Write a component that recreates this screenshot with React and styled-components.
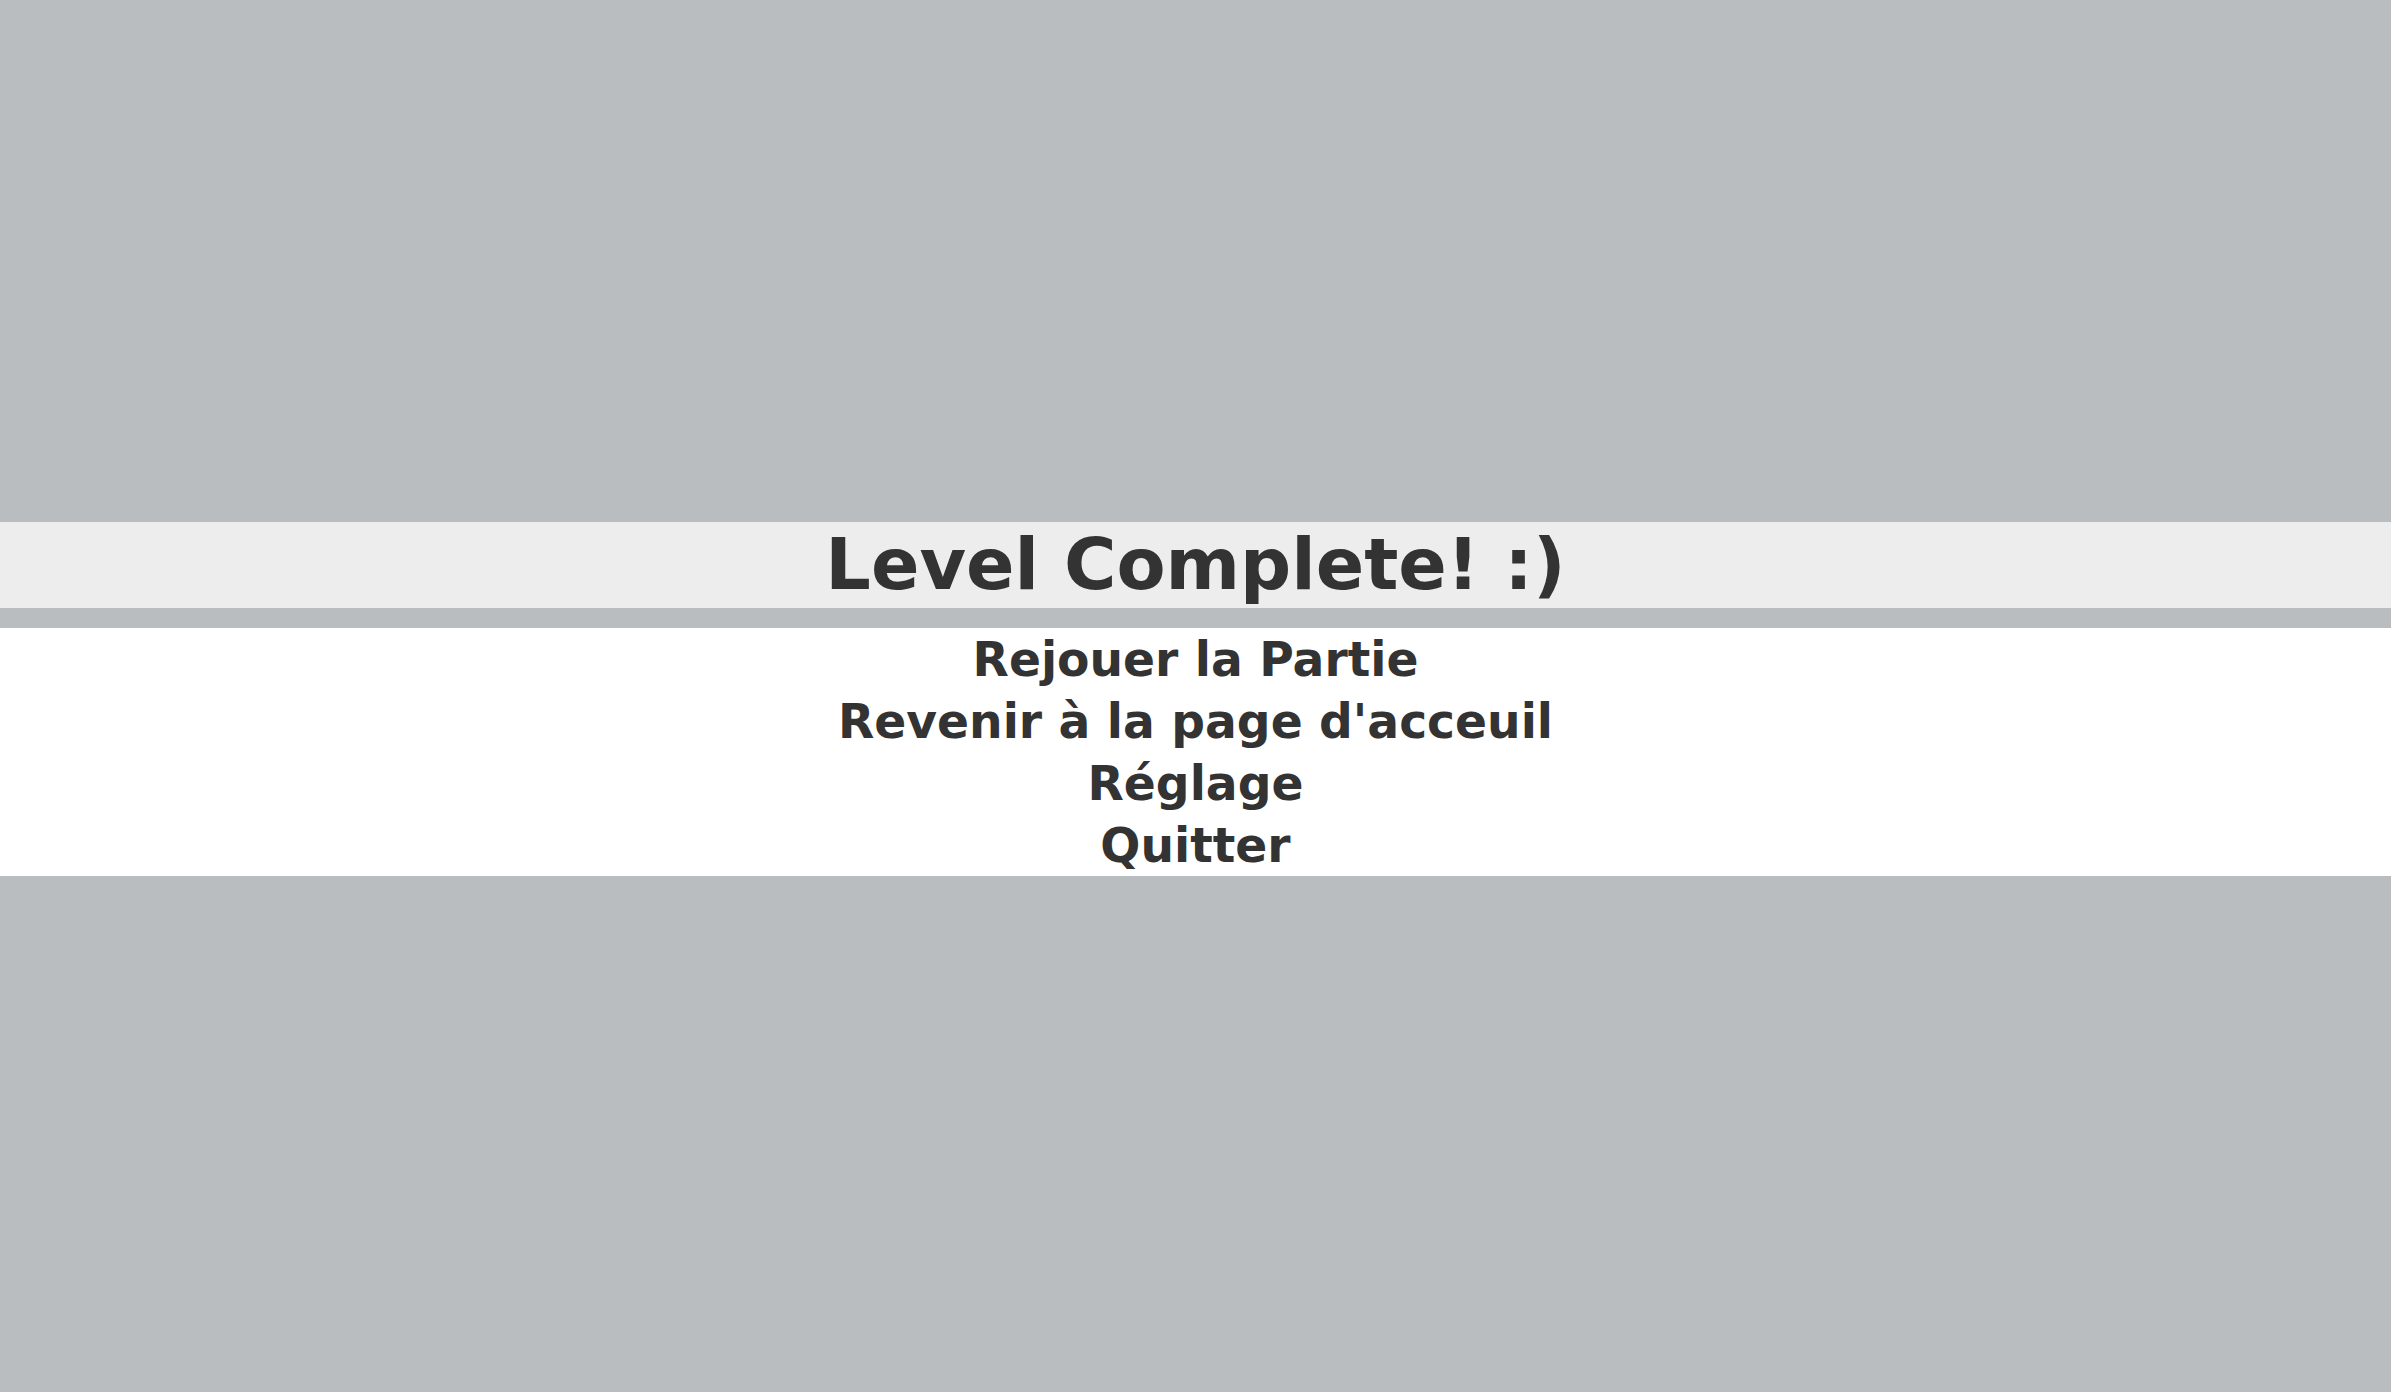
import { createGlobalStyle } from "styled-components";
import styled from "styled-components";

const GlobalStyle = createGlobalStyle`
  html, body {
    margin: 0;
    padding: 0;
    background: #babdc0;
  }
  #root {
    min-height: 100vh;
  }
`;

const Screen = styled.div`
  height: 100vh;
  display: flex;
  flex-direction: column;
  justify-content: center;
  padding-top: 6px;
  box-sizing: border-box;
  background: #babdc0;
  font-family: "DejaVu Sans", "Liberation Sans", sans-serif;
  color: #333333;
`;

const TitleBand = styled.div`
  height: 86px;
  display: flex;
  align-items: center;
  justify-content: center;
  background: #ededed;
  margin-bottom: 20px;
`;

const Title = styled.h1`
  margin: 0;
  font-size: 71.5px;
  font-weight: bold;
  line-height: 1;
`;

const Menu = styled.ul`
  list-style: none;
  margin: 0;
  padding: 0;
  background: #ffffff;
`;

const MenuItem = styled.li`
  height: 62px;
  display: flex;
  align-items: center;
  justify-content: center;
  font-size: 47.2px;
  font-weight: bold;
  cursor: pointer;
`;

const items = [
  "Rejouer la Partie",
  "Revenir à la page d'acceuil",
  "Réglage",
  "Quitter",
];

export default function App() {
  return (
    <>
      <GlobalStyle />
      <Screen>
        <TitleBand>
          <Title>Level Complete! :)</Title>
        </TitleBand>
        <Menu>
          {items.map((label) => (
            <MenuItem key={label}>{label}</MenuItem>
          ))}
        </Menu>
      </Screen>
    </>
  );
}
